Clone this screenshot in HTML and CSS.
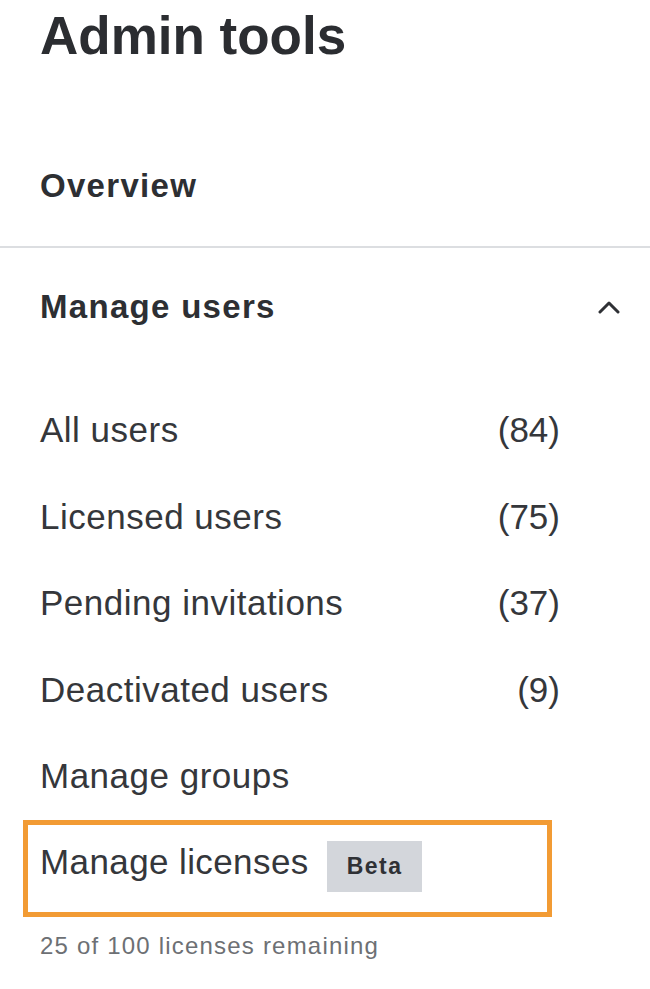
FILE: index.html
```html
<!DOCTYPE html>
<html lang="en">
<head>
<meta charset="utf-8">
<title>Admin tools</title>
<link rel="stylesheet" href="styles.css">
</head>
<body>
<div class="page">
  <h1 class="title">Admin tools</h1>
  <div class="overview">Overview</div>
  <hr class="divider">
  <div class="group-header">
    <span class="group-title">Manage users</span>
    <svg class="chevron" width="22" height="14" viewBox="0 0 22 14" aria-hidden="true">
      <path d="M2 12 L11 3 L20 12" fill="none" stroke="#2f3135" stroke-width="3" stroke-linecap="round" stroke-linejoin="round"/>
    </svg>
  </div>
  <ul class="list">
    <li class="row"><span>All users</span><span class="count">(84)</span></li>
    <li class="row"><span>Licensed users</span><span class="count">(75)</span></li>
    <li class="row"><span>Pending invitations</span><span class="count">(37)</span></li>
    <li class="row"><span>Deactivated users</span><span class="count">(9)</span></li>
    <li class="row"><span>Manage groups</span></li>
  </ul>
  <div class="highlight">
    <div class="licenses-row">
      <span>Manage licenses</span>
      <span class="badge">Beta</span>
    </div>
  </div>
  <p class="note">25 of 100 licenses remaining</p>
</div>
</body>
</html>
```

FILE: styles.css
```css
* {
  box-sizing: border-box;
}

html, body {
  margin: 0;
  padding: 0;
  background: #ffffff;
}

body {
  font-family: "Liberation Sans", Arial, sans-serif;
  color: #35373b;
}

.page {
  width: 650px;
  padding-top: 4px;
}

.title {
  margin: 0 0 0 40px;
  font-size: 53px;
  line-height: 64px;
  font-weight: 700;
  color: #2b2d31;
}

.overview {
  margin-top: 98px;
  padding-left: 40px;
  font-size: 33px;
  line-height: 40px;
  font-weight: 700;
  letter-spacing: 1.3px;
  color: #2d2f33;
}

.divider {
  margin: 40px 0 0 0;
  border: 0;
  height: 2px;
  background: #dcdee1;
}

.group-header {
  margin-top: 39px;
  padding: 0 30px 0 40px;
  height: 40px;
  display: flex;
  align-items: center;
  justify-content: space-between;
}

.group-title {
  font-size: 33px;
  line-height: 40px;
  font-weight: 700;
  letter-spacing: 1.3px;
  color: #2d2f33;
}

.chevron {
  display: block;
}

.list {
  list-style: none;
  margin: 83.4px 0 0 0;
  padding: 0 0 0 40px;
  width: 560px;
  display: flex;
  flex-direction: column;
  gap: 46.4px;
}

.row {
  display: flex;
  justify-content: space-between;
  font-size: 35px;
  line-height: 40px;
  letter-spacing: 0.5px;
}

.count {
  letter-spacing: 0;
}

.highlight {
  margin: 24px 0 0 23px;
  width: 529px;
  border: 5px solid #f29b34;
  padding: 16.3px 0 19.7px 12px;
}

.licenses-row {
  display: flex;
  align-items: baseline;
  gap: 18px;
  font-size: 35px;
  line-height: 40px;
  letter-spacing: 0.4px;
}

.badge {
  background: #d3d6db;
  padding: 0 19px 0 20px;
  font-size: 23px;
  line-height: 51px;
  font-weight: 700;
  letter-spacing: 1.5px;
  color: #2f3135;
}

.note {
  margin: 13.7px 0 0 40px;
  font-size: 24px;
  line-height: 30px;
  letter-spacing: 1.2px;
  color: #6d7074;
}
```
